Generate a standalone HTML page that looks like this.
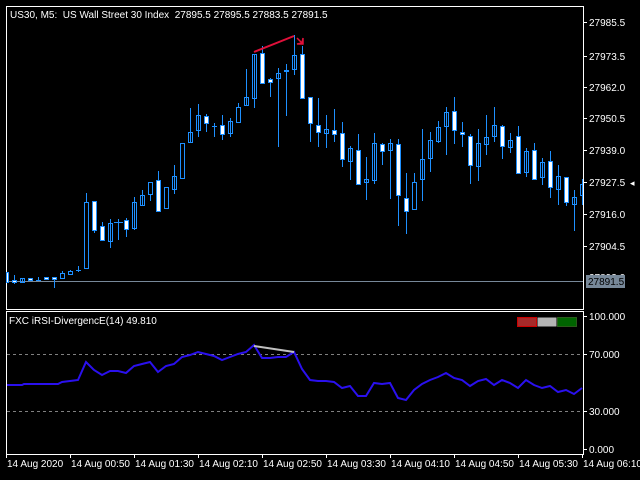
<!DOCTYPE html>
<html><head><meta charset="utf-8"><style>
html,body{margin:0;padding:0;background:#000;width:640px;height:480px;overflow:hidden}
svg{display:block}
text{font-family:"Liberation Sans",sans-serif;font-size:10px;fill:#fff}
</style></head><body>
<svg width="640" height="480" viewBox="0 0 640 480" shape-rendering="crispEdges">
<rect width="640" height="480" fill="#000"/>
<path d="M6.5 6.5H583.5V309.5H6.5Z M6.5 311.5H583.5V454.5H6.5Z" fill="none" stroke="#fff"/>
<path d="M583 22.5h4M583 56.5h4M583 87.5h4M583 118.5h4M583 150.5h4M583 182.5h4M583 214.5h4M583 246.5h4M583 316.5h4M583 354.5h4M583 411.5h4M583 449.5h4" stroke="#fff"/>
<g>
<text x="589" y="26">27985.5</text>
<text x="589" y="60">27973.5</text>
<text x="589" y="91">27962.0</text>
<text x="589" y="122">27950.5</text>
<text x="589" y="154">27939.0</text>
<text x="589" y="186">27927.5</text>
<text x="589" y="218">27916.0</text>
<text x="589" y="250">27904.5</text>
<text x="589" y="281">27893.0</text>
</g>
<text x="630" y="186" style="font-size:9px">◂</text>
<line x1="7" y1="281.5" x2="583" y2="281.5" stroke="#778899"/>
<rect x="586" y="275" width="39" height="13" fill="#778899"/>
<text x="588" y="285" style="fill:#000">27891.5</text>
<text x="10" y="18" xml:space="preserve">US30, M5:  US Wall Street 30 Index  27895.5 27895.5 27883.5 27891.5</text>
<g stroke="#1e90ff" fill="none">
<path d="M14.5 275V284M22.5 278V283M38.5 277V281M54.5 277V288M62.5 271V273M70.5 270V271M78.5 266V272M86.5 193V202M94.5 230V233M102.5 222V241M110.5 219V248M118.5 219V240M126.5 218V237M134.5 197V230M142.5 190V206M150.5 194V201M158.5 171V180M174.5 165V194M190.5 108V143M198.5 104V137M206.5 114V132M214.5 123V137M222.5 115V140M230.5 118V137M238.5 103V107M246.5 69V106M254.5 54V108M262.5 46V53M270.5 78V97M278.5 68V147M286.5 64V116M294.5 35V75M302.5 46V54M310.5 123V142M318.5 98V147M326.5 115V148M334.5 109V142M342.5 122V167M350.5 146V180M358.5 134V150M366.5 157V200M374.5 133V184M382.5 143V165M390.5 139V199M398.5 139V226M406.5 173V234M414.5 173V182M422.5 129V201M430.5 132V172M438.5 121V143M446.5 107V155M454.5 97V144M462.5 122V147M470.5 134V184M478.5 129V181M486.5 115V155M494.5 107V142M502.5 125V159M510.5 133V153M518.5 126V136M526.5 148V177M534.5 143V150M542.5 158V185M550.5 151V198M558.5 165V205M566.5 202V206M574.5 190V231M582.5 179V205"/>
<path d="M114 222.5h9M212 126.5h5M36 280.5h5M76 270.5h5"/>
<g>
<rect x="6.5" y="272.5" width="2" height="10" fill="#fff"/>
<rect x="12.5" y="280.5" width="4" height="2" fill="#fff"/>
<rect x="20.5" y="278.5" width="4" height="4"/>
<rect x="28.5" y="278.5" width="4" height="2" fill="#fff"/>
<rect x="44.5" y="277.5" width="4" height="2" fill="#fff"/>
<rect x="52.5" y="277.5" width="4" height="2" fill="#fff"/>
<rect x="60.5" y="273.5" width="4" height="5"/>
<rect x="68.5" y="271.5" width="4" height="3"/>
<rect x="84.5" y="202.5" width="4" height="66"/>
<rect x="92.5" y="201.5" width="4" height="29" fill="#fff"/>
<rect x="100.5" y="226.5" width="4" height="14" fill="#fff"/>
<rect x="108.5" y="223.5" width="4" height="18"/>
<rect x="124.5" y="220.5" width="4" height="9" fill="#fff"/>
<rect x="132.5" y="202.5" width="4" height="26"/>
<rect x="140.5" y="195.5" width="4" height="10"/>
<rect x="148.5" y="182.5" width="4" height="12"/>
<rect x="156.5" y="180.5" width="4" height="31" fill="#fff"/>
<rect x="164.5" y="187.5" width="4" height="21"/>
<rect x="172.5" y="176.5" width="4" height="13"/>
<rect x="180.5" y="143.5" width="4" height="35"/>
<rect x="188.5" y="132.5" width="4" height="10"/>
<rect x="196.5" y="115.5" width="4" height="15"/>
<rect x="204.5" y="116.5" width="4" height="7" fill="#fff"/>
<rect x="220.5" y="125.5" width="4" height="9" fill="#fff"/>
<rect x="228.5" y="121.5" width="4" height="12"/>
<rect x="236.5" y="107.5" width="4" height="15"/>
<rect x="244.5" y="97.5" width="4" height="8"/>
<rect x="252.5" y="54.5" width="4" height="44"/>
<rect x="260.5" y="53.5" width="4" height="30" fill="#fff"/>
<rect x="268.5" y="79.5" width="4" height="3" fill="#fff"/>
<rect x="276.5" y="73.5" width="4" height="5"/>
<rect x="284.5" y="70.5" width="4" height="1"/>
<rect x="292.5" y="55.5" width="4" height="14"/>
<rect x="300.5" y="54.5" width="4" height="44" fill="#fff"/>
<rect x="308.5" y="97.5" width="4" height="26" fill="#fff"/>
<rect x="316.5" y="125.5" width="4" height="7" fill="#fff"/>
<rect x="324.5" y="129.5" width="4" height="4"/>
<rect x="332.5" y="130.5" width="4" height="4" fill="#fff"/>
<rect x="340.5" y="133.5" width="4" height="26" fill="#fff"/>
<rect x="348.5" y="148.5" width="4" height="13"/>
<rect x="356.5" y="150.5" width="4" height="34" fill="#fff"/>
<rect x="364.5" y="179.5" width="4" height="3"/>
<rect x="372.5" y="143.5" width="4" height="37"/>
<rect x="380.5" y="144.5" width="4" height="7" fill="#fff"/>
<rect x="388.5" y="143.5" width="4" height="7"/>
<rect x="396.5" y="144.5" width="4" height="51" fill="#fff"/>
<rect x="404.5" y="198.5" width="4" height="13" fill="#fff"/>
<rect x="412.5" y="182.5" width="4" height="27"/>
<rect x="420.5" y="159.5" width="4" height="20"/>
<rect x="428.5" y="140.5" width="4" height="18"/>
<rect x="436.5" y="127.5" width="4" height="14"/>
<rect x="444.5" y="112.5" width="4" height="14"/>
<rect x="452.5" y="111.5" width="4" height="19" fill="#fff"/>
<rect x="460.5" y="132.5" width="4" height="2" fill="#fff"/>
<rect x="468.5" y="136.5" width="4" height="29" fill="#fff"/>
<rect x="476.5" y="143.5" width="4" height="23"/>
<rect x="484.5" y="137.5" width="4" height="7"/>
<rect x="492.5" y="125.5" width="4" height="11"/>
<rect x="500.5" y="126.5" width="4" height="20" fill="#fff"/>
<rect x="508.5" y="140.5" width="4" height="7"/>
<rect x="516.5" y="136.5" width="4" height="37" fill="#fff"/>
<rect x="524.5" y="151.5" width="4" height="21"/>
<rect x="532.5" y="150.5" width="4" height="29" fill="#fff"/>
<rect x="540.5" y="162.5" width="4" height="15"/>
<rect x="548.5" y="161.5" width="4" height="26" fill="#fff"/>
<rect x="556.5" y="176.5" width="4" height="13"/>
<rect x="564.5" y="177.5" width="4" height="25" fill="#fff"/>
<rect x="572.5" y="197.5" width="4" height="7"/>
<rect x="580.5" y="184.5" width="2" height="11"/>
</g>
</g>
<g shape-rendering="auto">
<line x1="254" y1="52" x2="294" y2="36" stroke="#e0103a" stroke-width="2"/>
<path d="M297 38l5 5l1-5v6h-6l5-1z" fill="#e0103a" stroke="#e0103a" stroke-width="1.5"/>
</g>
<text x="9" y="324">FXC iRSI-DivergencE(14) 49.810</text>
<rect x="517.5" y="317.5" width="19" height="9" fill="#a52a2a" stroke="#c00"/>
<rect x="537.5" y="317.5" width="19" height="9" fill="#b4b4b4"/>
<rect x="557.5" y="317.5" width="19" height="9" fill="#006400" stroke="#2a5a1a"/>
<path d="M7 354.5H583M7 411.5H583" stroke="#808080" stroke-dasharray="3,3"/>
<g shape-rendering="auto" fill="none">
<polyline stroke="#2a10ee" stroke-width="2" points="7,385 22,385 24,384 58,384 62,382 70,381 78,380 86,362 94,370 102,375 110,371 118,371 126,373 134,366 142,364 150,362 158,372 166,366 174,364 182,357 190,355 198,352 206,354 214,356 222,360 230,357 238,354 246,352 254,345 262,358 270,358 278,357 286,357 294,352 302,369 310,380 318,381 326,381 334,382 342,388 350,386 358,396 366,396 374,383 382,384 390,383 398,398 406,400 414,390 422,384 430,380 438,377 446,373 454,378 462,380 470,386 478,381 486,379 494,385 502,380 510,383 518,388 526,380 534,385 542,388 550,386 558,392 566,390 574,394 582,388"/>
<line x1="254" y1="346" x2="294" y2="352" stroke="#c0c0c0" stroke-width="2"/>
</g>
<text x="589" y="320">100.000</text>
<text x="589" y="358">70.000</text>
<text x="589" y="415">30.000</text>
<text x="589" y="453">0.000</text>
<path d="M6.5 454v4M70.5 454v4M134.5 454v4M198.5 454v4M262.5 454v4M326.5 454v4M390.5 454v4M454.5 454v4M518.5 454v4M582.5 454v4" stroke="#fff"/>
<text x="7" y="467">14 Aug 2020</text>
<text x="71" y="467">14 Aug 00:50</text>
<text x="135" y="467">14 Aug 01:30</text>
<text x="199" y="467">14 Aug 02:10</text>
<text x="263" y="467">14 Aug 02:50</text>
<text x="327" y="467">14 Aug 03:30</text>
<text x="391" y="467">14 Aug 04:10</text>
<text x="455" y="467">14 Aug 04:50</text>
<text x="519" y="467">14 Aug 05:30</text>
<text x="583" y="467">14 Aug 06:10</text>
</svg>
</body></html>
